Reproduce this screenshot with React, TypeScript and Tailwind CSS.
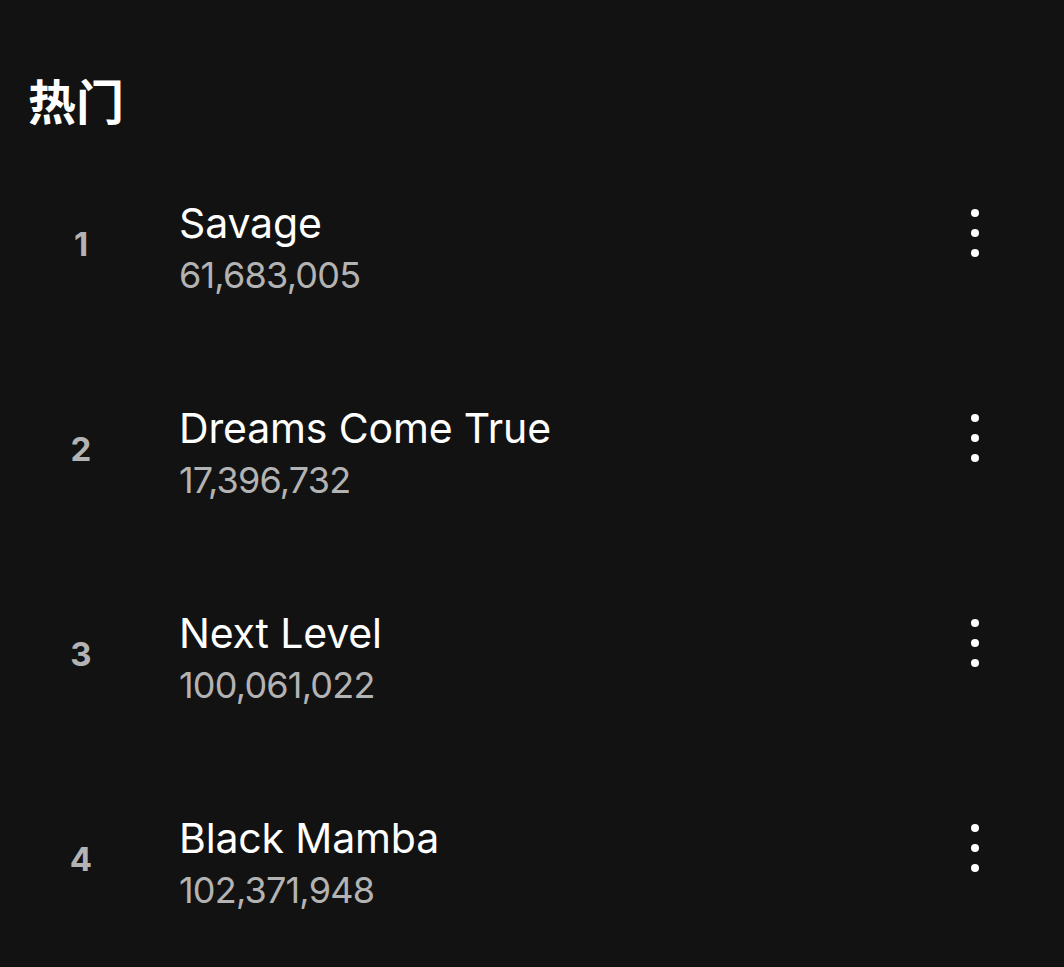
const tracks = [
  { title: "Savage", plays: "61,683,005" },
  { title: "Dreams Come True", plays: "17,396,732" },
  { title: "Next Level", plays: "100,061,022" },
  { title: "Black Mamba", plays: "102,371,948" },
]

function MoreIcon() {
  return (
    <svg width="24" height="56" viewBox="0 0 24 56" fill="white" className="mb-[24px]">
      <circle cx="12" cy="8" r="4" />
      <circle cx="12" cy="28" r="4" />
      <circle cx="12" cy="48" r="4" />
    </svg>
  )
}

export default function App() {
  return (
    <div
      className="min-h-screen w-full bg-[#121212] pt-[71px] text-white"
      style={{ fontFamily: "Inter, 'Noto Sans CJK SC', sans-serif" }}
    >
      <h2 className="mb-[7px] h-[64px] px-[28px] text-[48px] font-bold leading-[64px]">热门</h2>
      <ul>
        {tracks.map((t, i) => (
          <li key={t.title} className="flex h-[205px] items-center pl-[28px] pr-[77px]">
            <div className="w-[106px] text-center text-[33px] font-bold text-[#b3b3b3]">{i + 1}</div>
            <div className="ml-[45px] flex min-w-0 flex-1 flex-col pt-[6px]">
              <span className="text-[41px] leading-[48px] tracking-[-0.15px]">{t.title}</span>
              <span className="mt-[6px] text-[36px] leading-[44px] tracking-[-0.8px] text-[#b3b3b3]">{t.plays}</span>
            </div>
            <MoreIcon />
          </li>
        ))}
      </ul>
    </div>
  )
}
